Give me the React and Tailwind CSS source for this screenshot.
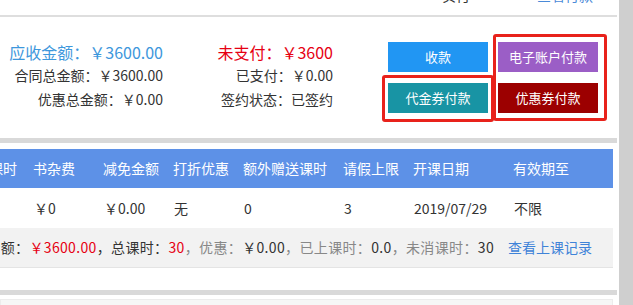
import React from 'react';

const cols = [
    { w: 'w-[33px]', head: '课时', cell: '' },
    { w: 'w-[70px]', head: '书杂费', cell: '￥0' },
    { w: 'w-[70px]', head: '减免金额', cell: '￥0.00' },
    { w: 'w-[70px]', head: '打折优惠', cell: '无' },
    { w: 'w-[100px]', head: '额外赠送课时', cell: '0' },
    { w: 'w-[70px]', head: '请假上限', cell: '3' },
    { w: 'w-[100px]', head: '开课日期', cell: '2019/07/29' },
    { w: 'flex-1', head: '有效期至', cell: '不限' },
];

export default function App() {
    const font = { fontFamily: '"Microsoft YaHei", "Noto Sans CJK SC", "Liberation Sans", sans-serif' };

    return (
        <div className="flex w-[633px] h-[305px] overflow-hidden bg-white text-[14px] text-[#333]" style={font}>
            <div className="w-[619px] flex flex-col">
                {/* cut-off row above */}
                <div className="shrink-0 h-[17px] w-[617px] border-b-2 border-[#dedede] overflow-hidden">
                    <div className="flex -mt-[15px] leading-[20px]">
                        <span className="ml-[442px] text-[#333]">实付</span>
                        <span className="ml-[67px] text-[#4a8ad8]">查看付款</span>
                    </div>
                </div>

                {/* totals + buttons */}
                <div className="shrink-0 relative h-[121px] flex">
                    <div className="w-[163px] pt-[23px] text-right whitespace-nowrap">
                        <div className="h-[24px] leading-[24px] text-[16px] text-[#3d97dc]">应收金额：￥3600.00</div>
                        <div className="h-[23px] leading-[23px]">合同总金额：￥3600.00</div>
                        <div className="h-[24px] leading-[24px]">优惠总金额：￥0.00</div>
                    </div>
                    <div className="w-[170px] pt-[23px] text-right whitespace-nowrap">
                        <div className="h-[24px] leading-[24px] text-[16px] text-[#e60012]">未支付：￥3600</div>
                        <div className="h-[23px] leading-[23px]">已支付：￥0.00</div>
                        <div className="h-[24px] leading-[24px]">签约状态：已签约</div>
                    </div>
                    <div className="ml-[55px] pt-[25px] grid grid-cols-2 gap-x-[10px] gap-y-[11px] h-fit text-white text-[13px]">
                        <button className="w-[100px] h-[30px] bg-[#2196f3]">收款</button>
                        <button className="w-[100px] h-[30px] bg-[#9b5ec6]">电子账户付款</button>
                        <button className="w-[100px] h-[30px] bg-[#1894a4]">代金券付款</button>
                        <button className="w-[100px] h-[30px] bg-[#9c0000]">优惠券付款</button>
                    </div>
                    <div className="absolute left-[493px] top-[17px] w-[114px] h-[87px] border-[3px] border-[#e8221b] rounded-[3px]" />
                    <div className="absolute left-[382px] top-[58px] w-[112px] h-[47px] border-[3px] border-[#e8221b] rounded-[3px]" />
                </div>

                <div className="shrink-0 h-[5px] w-[617px] bg-[#d9d9d9]" />

                {/* course table */}
                <div className="shrink-0 pt-[6px] w-[613px]">
                    <div className="flex h-[39px] items-center bg-[#5d91e7] text-white whitespace-nowrap">
                        {cols.map((c, i) => (
                            <div key={i} className={`${c.w} shrink-0`}>
                                {i === 0 ? <span className="inline-block -ml-[11px]">{c.head}</span> : c.head}
                            </div>
                        ))}
                    </div>
                    <div className="flex h-[40px] items-center whitespace-nowrap">
                        {cols.map((c, i) => (
                            <div key={i} className={`${c.w} shrink-0 ${i === 0 ? '' : 'pl-[1px]'}`}>
                                {c.cell}
                            </div>
                        ))}
                    </div>
                    <div className="flex h-[40px] items-center bg-[#f2f2f2] border-b border-[#e4e4e4] whitespace-nowrap">
                        <div className="-ml-[28px] tracking-[0.35px]">
                            <span>总金额：</span>
                            <span className="text-[#e60012]">￥3600.00</span>
                            <span>，总课时：</span>
                            <span className="text-[#e60012]">30</span>
                            <span className="text-[#888]">，优惠：</span>
                            <span>￥0.00</span>
                            <span className="text-[#888]">，已上课时：</span>
                            <span>0.0</span>
                            <span className="text-[#888]">，未消课时：</span>
                            <span>30</span>
                        </div>
                        <a className="ml-[14px] text-[#3f83d8]">查看上课记录</a>
                    </div>
                    <div className="h-[22px]" />
                </div>

                <div className="shrink-0 h-[5px] w-[617px] bg-[#d9d9d9]" />
                <div className="shrink-0 mt-[4px] h-[10px] w-[613px] bg-[#f6f6f6] border border-[#ececec]" />
            </div>
            <div className="flex-1 bg-[#cfcfcf]" />
        </div>
    );
}
